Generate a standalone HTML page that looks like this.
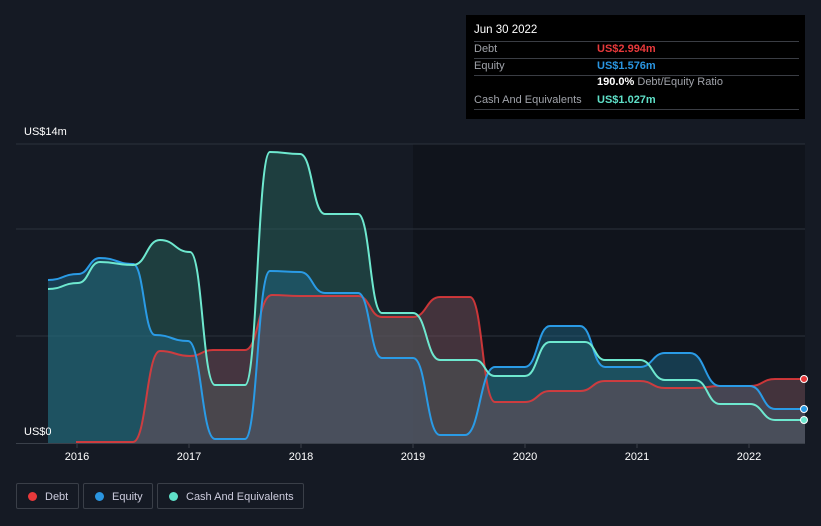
<!DOCTYPE html>
<html><head><meta charset="utf-8"><style>
body{margin:0;width:821px;height:526px;background:#151a24;font-family:"Liberation Sans",sans-serif;overflow:hidden;position:relative}
.tt{position:absolute;left:466px;top:15px;width:339px;height:104px;background:#000;color:#fff;font-size:11px}
.tt .r{position:absolute;left:8px;right:6px;border-bottom:1px solid #3a3d44;height:17px;line-height:17px}
.lab{color:#a0a3aa}
.leg{position:absolute;top:483px;height:26px;border:1px solid #3a3f48;border-radius:2px;color:#ccd;font-size:11px;line-height:26px;box-sizing:border-box}
.dot{display:inline-block;width:9px;height:9px;border-radius:50%;margin:0 8px 0 11px;vertical-align:-1px}
</style></head><body>
<svg id="s" width="821" height="526" style="position:absolute;left:0;top:0"></svg>
<div class="tt">
<div style="position:absolute;left:8px;top:9px;font-size:11.5px">Jun 30 2022</div>
<div style="position:absolute;left:8px;right:6px;top:26px;border-top:1px solid #3a3d44"></div>
<div class="r" style="top:26px"><span class="lab">Debt</span><span style="position:absolute;left:123px;color:#e8393b;font-weight:bold">US$2.994m</span></div>
<div class="r" style="top:43px"><span class="lab">Equity</span><span style="position:absolute;left:123px;color:#2a95e0;font-weight:bold">US$1.576m</span></div>
<div style="position:absolute;left:131px;top:61px"><b>190.0%</b> <span class="lab">Debt/Equity Ratio</span></div>
<div class="r" style="top:77px"><span class="lab">Cash And Equivalents</span><span style="position:absolute;left:123px;color:#5fe0c8;font-weight:bold">US$1.027m</span></div>
</div>
<div class="leg" style="left:16px;width:63px"><span class="dot" style="background:#e8393b"></span>Debt</div>
<div class="leg" style="left:83px;width:70px"><span class="dot" style="background:#2a95e0"></span>Equity</div>
<div class="leg" style="left:157px;width:147px"><span class="dot" style="background:#5fe0c8"></span>Cash And Equivalents</div>
<script>
const C=[[48,289],[78,283],[100,262],[133,265],[160,240],[190,252],[215,385],[245,385],[270,152],[300,154],[325,214],[358,214],[382,313],[413,313],[440,360],[475,360],[495,376],[525,376],[550,342],[585,342],[605,360],[640,360],[665,380],[695,380],[720,404],[750,404],[775,420],[805,420]];
const E=[[48,280],[78,274],[100,258],[133,264],[155,335],[188,341],[215,439],[245,439],[270,271],[300,272],[325,293],[358,293],[382,358],[413,358],[440,435],[465,435],[495,367],[525,367],[550,326],[580,326],[605,367],[640,367],[665,353],[690,353],[720,386],[750,386],[775,409],[805,409]];
const D=[[76,442],[133,442],[160,351],[190,356],[213,350],[245,350],[272,295],[300,296],[358,296],[382,317],[413,317],[440,297],[470,297],[495,402],[525,402],[550,391],[580,391],[605,381],[640,381],[665,388],[695,388],[720,386],[750,386],[775,379],[805,379]];
function p(a){let d="M"+a[0][0]+","+a[0][1];for(let i=1;i<a.length;i++){let[x0,y0]=a[i-1],[x1,y1]=a[i],h=(x1-x0)/2;d+=` C${x0+h},${y0} ${x1-h},${y1} ${x1},${y1}`;}return d;}
function area(a){return p(a)+` L${a[a.length-1][0]},443 L${a[0][0]},443 Z`;}
let s=`<rect x="413" y="144" width="392" height="299" fill="#10141c"/>`;
[144,229,336].forEach(y=>s+=`<line x1="16" x2="805" y1="${y}" y2="${y}" stroke="#2c323c"/>`);
s+=`<line x1="16" x2="805" y1="443.5" y2="443.5" stroke="#3a404a"/>`;
s+=`<path d="${area(C)}" fill="#2a6a62" fill-opacity=".45"/>`;
s+=`<path d="${area(E)}" fill="#1e6b8c" fill-opacity=".45"/>`;
s+=`<path d="${area(D)}" fill="#8a2a2e" fill-opacity=".35"/>`;
s+=`<path d="${area(D)}" fill="#5a6a7a" fill-opacity=".3"/>`;
s+=`<path d="${p(D)}" fill="none" stroke="#e8393b" stroke-width="2" opacity=".85"/>`;
s+=`<path d="${p(E)}" fill="none" stroke="#2a9be6" stroke-width="2"/>`;
s+=`<path d="${p(C)}" fill="none" stroke="#6ee8cf" stroke-width="2"/>`;
s+=`<circle cx="804" cy="379" r="3.5" fill="#e8393b" stroke="#fff"/><circle cx="804" cy="409" r="3.5" fill="#2a9be6" stroke="#fff"/><circle cx="804" cy="420" r="3.5" fill="#6ee8cf" stroke="#fff"/>`;
s+=`<text x="24" y="135" fill="#fff" font-size="11">US$14m</text><text x="24" y="435" fill="#fff" font-size="11">US$0</text>`;
[[77,"2016"],[189,"2017"],[301,"2018"],[413,"2019"],[525,"2020"],[637,"2021"],[749,"2022"]].forEach(([x,t])=>{s+=`<line x1="${x}" x2="${x}" y1="443" y2="448" stroke="#3a404a"/><text x="${x}" y="460" fill="#fff" font-size="11" text-anchor="middle">${t}</text>`});
document.getElementById("s").innerHTML=s;
</script>
</body></html>
